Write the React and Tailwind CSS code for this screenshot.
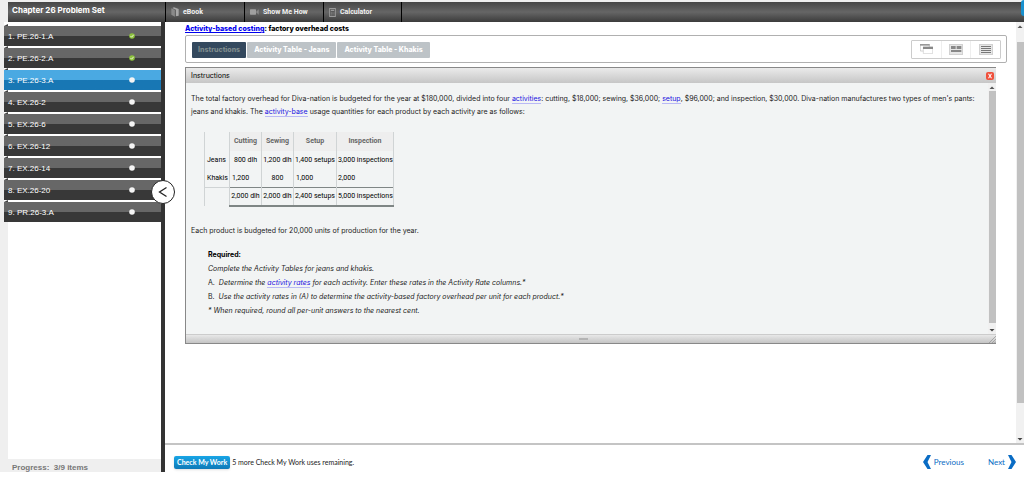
import React from "react";

const items = [
  { label: "1. PE.26-1.A", state: "done" },
  { label: "2. PE.26-2.A", state: "done" },
  { label: "3. PE.26-3.A", state: "current" },
  { label: "4. EX.26-2", state: "open" },
  { label: "5. EX.26-6", state: "open" },
  { label: "6. EX.26-12", state: "open" },
  { label: "7. EX.26-14", state: "open" },
  { label: "8. EX.26-20", state: "open" },
  { label: "9. PR.26-3.A", state: "open" },
];

const tabs = ["Activity Table - Jeans", "Activity Table - Khakis"];

function StatusDot({ done }) {
  return (
    <svg viewBox="0 0 12 12" className="size-[6px] shrink-0" aria-hidden="true">
      <circle cx="6" cy="6" r="5.6" fill={done ? "#8dc23c" : "#f4f4f4"} />
      {done && <path d="M3 6.2 5.2 8.4 9.2 3.6" fill="none" stroke="#f2fbe2" strokeWidth="1.8" />}
    </svg>
  );
}

function BookIcon() {
  return (
    <svg viewBox="0 0 24 30" className="h-[10px] w-2" aria-hidden="true">
      <path d="M1 4 12 9v20L1 23z" fill="#8a8a8a" />
      <path d="M4 3 9 1l14 5v20l-9 2V8z" fill="#a8a8a8" />
      <path d="M13 8v20" stroke="#444" strokeWidth="1.5" />
    </svg>
  );
}

function CameraIcon() {
  return (
    <svg viewBox="0 0 30 20" className="h-[6px] w-[9px]" aria-hidden="true">
      <rect x="0" y="1" width="20" height="18" rx="2" fill="#a0a0a0" />
      <path d="M20 10 29 1v18z" fill="#8b8b8b" />
    </svg>
  );
}

function CalculatorIcon() {
  return (
    <svg viewBox="0 0 20 27" className="h-[9px] w-[7px]" aria-hidden="true">
      <rect x="1.5" y="1.5" width="17" height="24" fill="#565656" stroke="#9a9a9a" strokeWidth="3" />
      <rect x="5" y="5" width="10" height="4" fill="#9a9a9a" />
      <path d="M5 13h3m2 0h3m2 0h1M5 17h3m2 0h3m2 0h1M5 21h3m2 0h3m2 0h1" stroke="#9a9a9a" strokeWidth="2" />
    </svg>
  );
}

function Scrollbar({ className, thumb }) {
  return (
    <div className={"flex shrink-0 flex-col items-center bg-[#f1f1f1] " + className} aria-hidden="true">
      <svg viewBox="0 0 8 8" className="size-2">
        <path d="M1.500 6 4 3.500 6.500 6z" fill="#555" />
      </svg>
      <div className={"bg-[#c1c1c1] " + thumb} />
      <svg viewBox="0 0 8 8" className="mt-auto size-2">
        <path d="M1.500 3 4 5.500 6.500 3z" fill="#444" />
      </svg>
    </div>
  );
}

function Term({ children }) {
  return (
    <a href="#term" className="border-b border-[#b9b9f5] text-[#1a12e0]">
      {children}
    </a>
  );
}

const toolBtn = "flex h-5 w-[79px] items-center gap-1 border-l border-black pl-[5px] font-['Roboto',sans-serif] text-[7px] font-bold text-[#f2f2f2]";
const cell = "border-r border-[#d0d4d5] pt-px ";
const totalCell = "border-t border-r border-b-2 border-x-[#d0d4d5] border-y-[#7f8685] ";

export default function App() {
  return (
    <div className="flex min-h-screen flex-col bg-white pb-2 font-['Inter',sans-serif] text-[7px] text-[#222]">
      <div className="flex flex-1 flex-col bg-[#efefef] pt-[2px]">
        <header className="relative ml-2 flex h-5 shrink-0 items-stretch bg-linear-to-b from-[#464646] via-[#666] to-[#3c3c3c]">
          <h1 className="w-[157px] pl-1 text-[8px] leading-[17px] font-bold text-white">Chapter 26 Problem Set</h1>
          <button className={toolBtn}>
            <BookIcon />
            eBook
          </button>
          <button className={toolBtn}>
            <CameraIcon />
            Show Me How
          </button>
          <button className={toolBtn + " border-r"}>
            <CalculatorIcon />
            Calculator
          </button>
          <div className="absolute top-[-2px] right-0 h-4 w-[3px] rounded-l-full bg-[#1991cf]" />
        </header>

        <div className="flex flex-1">
          <aside className="relative flex w-[165px] shrink-0 border-r-4 border-[#333]">
            <nav className="flex flex-1 flex-col">
              <ul className="ml-1 flex flex-col bg-white pt-[2px]">
                {items.map((it) => (
                  <li key={it.label}>
                    <div className="flex h-[2px]">
                      <span className="w-1 bg-[#444] [clip-path:polygon(100%_0,100%_100%,0_100%)]" />
                    </div>
                    <a
                      href="#item"
                      className={
                        "flex h-5 items-center justify-between pr-[26px] pl-1 font-['Liberation_Sans',sans-serif] text-[8px] text-white " +
                        (it.state === "current"
                          ? "bg-linear-to-b from-[#4aa9e2] from-50% to-[#1877b4] to-50%"
                          : "bg-linear-to-b from-[#676767] from-50% to-[#383838] to-50%")
                      }
                    >
                      <span className="pt-[2px]">{it.label}</span>
                      <StatusDot done={it.state === "done"} />
                    </a>
                  </li>
                ))}
              </ul>
              <div className="ml-2 flex-1 bg-white" />
              <p className="h-[13px] pt-1 pl-3 font-['Liberation_Sans',sans-serif] text-[8px] leading-[10px] font-bold text-[#777]">
                Progress:&nbsp; 3/9 items
              </p>
            </nav>
            <button
              aria-label="Collapse list"
              className="absolute top-[158px] -right-[14px] z-10 flex size-6 items-center justify-center rounded-full border border-[#222] bg-white"
            >
              <svg viewBox="0 0 24 24" className="size-3" aria-hidden="true">
                <path d="M19 3 5 12l14 9" fill="none" stroke="#222" strokeWidth="2.6" />
              </svg>
            </button>
          </aside>

          <main className="flex min-w-0 flex-1 flex-col bg-white">
            <div className="flex flex-1">
              <div className="min-w-0 flex-1 pr-[9px] pl-5">
                <h2 className="h-[13px] text-[7px] leading-[13px] font-extrabold text-black">
                  <a href="#term" className="text-[#0000ee] underline">Activity-based costing</a>: factory overhead costs
                </h2>
                <div className="flex h-7 items-center justify-between rounded-[2px] border border-[#b0b0b0] pr-[5px] pl-[6px]">
                  <div className="flex gap-px pt-px font-extrabold">
                    <button className="h-4 rounded-[1px] bg-[#34495e] px-[6px] pt-[2px] text-[#7f8c8d]">Instructions</button>
                    {tabs.map((t) => (
                      <button key={t} className="h-4 rounded-[1px] bg-[#bdc3c7] px-[7px] pt-[2px] text-white">
                        {t}
                      </button>
                    ))}
                  </div>
                  <div className="flex h-[19px] w-[90px] divide-x divide-[#eee] rounded-[1px] border border-[#ccc]">
                    <button aria-label="Cascade windows" className="flex flex-1 items-center justify-center">
                      <svg viewBox="0 0 39 30" className="h-[10px] w-[13px]" aria-hidden="true">
                        <path d="M1 1h27v20H1z" fill="#fff" stroke="#bbb" strokeWidth="2" />
                        <path d="M0 0h29v5H0z" fill="#999" />
                        <path d="M10 10h28v19H10z" fill="#fff" stroke="#ccc" strokeWidth="2" />
                        <path d="M9 8h30v7H9z" fill="#888" />
                      </svg>
                    </button>
                    <button aria-label="Tile windows" className="flex flex-1 items-center justify-center">
                      <svg viewBox="0 0 42 33" className="h-[11px] w-[14px]" aria-hidden="true">
                        <path d="M1 1h40v31H1z" fill="#e6e6e6" stroke="#bbb" strokeWidth="2" />
                        <path d="M6 6h14v9H6zM23 6h14v9H23zM6 18h31v6H6z" fill="#888" />
                      </svg>
                    </button>
                    <button aria-label="Stack windows" className="flex flex-1 items-center justify-center">
                      <svg viewBox="0 0 42 33" className="h-[11px] w-[14px]" aria-hidden="true">
                        <path d="M1 1h40v31H1z" fill="#e6e6e6" stroke="#bbb" strokeWidth="2" />
                        <path d="M6 7.500h30M6 13.500h30M6 19.500h30M6 25.500h30" stroke="#777" strokeWidth="3" />
                      </svg>
                    </button>
                  </div>
                </div>

                <section className="mt-1 mr-[11px] border-t border-b border-l border-[#888] bg-[#f2f4f4]">
                  <div className="flex h-[15px] items-center justify-between bg-linear-to-b from-[#ebebeb] to-[#c6c6c6] pr-[2px] pl-[5px]">
                    <h3 className="pt-[2px] text-black">Instructions</h3>
                    <button aria-label="Close" className="flex size-2 items-center justify-center rounded-[2px] bg-[#f0503c]">
                      <svg viewBox="0 0 8 8" className="size-[6px]" aria-hidden="true">
                        <path d="M2 1 6 7M6 1 2 7" stroke="#fff" strokeWidth="1.4" />
                      </svg>
                    </button>
                  </div>
                  <div className="flex">
                    <div className="min-w-0 flex-1 pt-[9px] pb-4 pl-[5px]">
                      <p className="leading-[13px]">
                        The total factory overhead for Diva-nation is budgeted for the year at $180,000, divided into four <Term>activities</Term>: cutting, $18,000; sewing, $36,000; <Term>setup</Term>, $96,000; and inspection, $30,000. Diva-nation manufactures two types of men's pants:
                        <br />
                        jeans and khakis. The <Term>activity-base</Term> usage quantities for each product by each activity are as follows:
                      </p>
                      <table className="mt-[14px] ml-[13px] border-collapse font-['Roboto',sans-serif] text-[7px] text-black">
                        <thead>
                          <tr className="h-[19px] text-[#666]">
                            <th className="w-[25px] border-x border-[#d0d4d5]" />
                            <th className="w-8 border-r border-[#d0d4d5] bg-[#eee]">Cutting</th>
                            <th className="w-8 border-r border-[#d0d4d5] bg-[#eee]">Sewing</th>
                            <th className="w-[43px] border-r border-[#d0d4d5] bg-[#eee]">Setup</th>
                            <th className="w-14 border-r border-[#d0d4d5] bg-[#eee]">Inspection</th>
                          </tr>
                        </thead>
                        <tbody className="whitespace-nowrap">
                          <tr className="h-[18px]">
                            <th className="border-x border-[#d0d4d5] pt-px pl-[2px] text-left font-normal">Jeans</th>
                            <td className={cell + "text-center"}>800 dlh</td>
                            <td className={cell + "text-center"}>1,200 dlh</td>
                            <td className={cell + "text-center"}>1,400 setups</td>
                            <td className={cell + "pl-px"}>3,000 inspections</td>
                          </tr>
                          <tr className="h-[18px]">
                            <th className="border-x border-[#d0d4d5] pt-px pl-[2px] text-left font-normal">Khakis</th>
                            <td className={cell + "pl-[2px]"}>1,200</td>
                            <td className={cell + "text-center"}>800</td>
                            <td className={cell + "pl-[2px]"}>1,000</td>
                            <td className={cell + "pl-px"}>2,000</td>
                          </tr>
                          <tr className="h-[19px]">
                            <th className="border-x border-t border-[#d0d4d5]" />
                            <td className={totalCell + "text-center"}>2,000 dlh</td>
                            <td className={totalCell + "text-center"}>2,000 dlh</td>
                            <td className={totalCell + "text-center"}>2,400 setups</td>
                            <td className={totalCell + "pl-px"}>5,000 inspections</td>
                          </tr>
                        </tbody>
                      </table>
                      <p className="mt-[17px] leading-[14px]">Each product is budgeted for 20,000 units of production for the year.</p>
                      <div className="mt-[10px] ml-[17px] leading-[14px] italic">
                        <p className="font-bold text-black not-italic">Required:</p>
                        <p>Complete the Activity Tables for jeans and khakis.</p>
                        <ol>
                          <li>
                            <span className="mr-1 not-italic">A.</span>Determine the <Term>activity rates</Term> for each activity. Enter these rates in the Activity Rate columns.*
                          </li>
                          <li>
                            <span className="mr-1 not-italic">B.</span>Use the activity rates in (A) to determine the activity-based factory overhead per unit for each product.*
                          </li>
                        </ol>
                        <p>* When required, round all per-unit answers to the nearest cent.</p>
                      </div>
                    </div>
                    <Scrollbar className="w-2" thumb="h-[232px] w-[7px]" />
                  </div>
                  <div className="relative flex h-[9px] items-center justify-center border-t border-[#ccc] bg-linear-to-b from-[#e8e8e8] to-[#c4c4c4]">
                    <div className="h-[2px] w-[9px] -translate-x-2 bg-[#b4b4b4]" />
                    <svg viewBox="0 0 8 8" className="absolute right-0 bottom-0 size-2" aria-hidden="true">
                      <path d="M1 8 8 1M4 8l4-4M6.500 8 8 6.500" stroke="#888" strokeWidth="0.600" />
                    </svg>
                  </div>
                </section>
              </div>
              <Scrollbar className="w-2" thumb="mt-3 h-[361px] w-[7px]" />
            </div>
            <footer className="flex h-[29px] items-center border-t-2 border-[#c4c4c4] pt-[7px] pr-2 pl-[9px] font-['Lato',sans-serif]">
              <button className="h-[13px] rounded-[2px] bg-linear-to-b from-[#18a5e6] to-[#0e7ab8] px-[3px] text-[7px] font-bold text-white shadow-sm">
                Check My Work
              </button>
              <span className="ml-[2px] text-[7px]">5 more Check My Work uses remaining.</span>
              <div className="ml-auto flex gap-6 text-[8px] text-[#0a6cc4]">
                <a href="#prev" className="flex items-center gap-[3px]">
                  <svg viewBox="0 0 8 14" className="h-[14px] w-2" aria-hidden="true">
                    <path d="M4.500 0H8L4.500 7 8 14H4.500L0 7z" fill="#0a6cc4" />
                  </svg>
                  Previous
                </a>
                <a href="#next" className="flex items-center gap-[3px]">
                  Next
                  <svg viewBox="0 0 8 14" className="h-[14px] w-2" aria-hidden="true">
                    <path d="M3.500 0H0l3.500 7L0 14h3.500L8 7z" fill="#0a6cc4" />
                  </svg>
                </a>
              </div>
            </footer>
          </main>
        </div>
      </div>
    </div>
  );
}
